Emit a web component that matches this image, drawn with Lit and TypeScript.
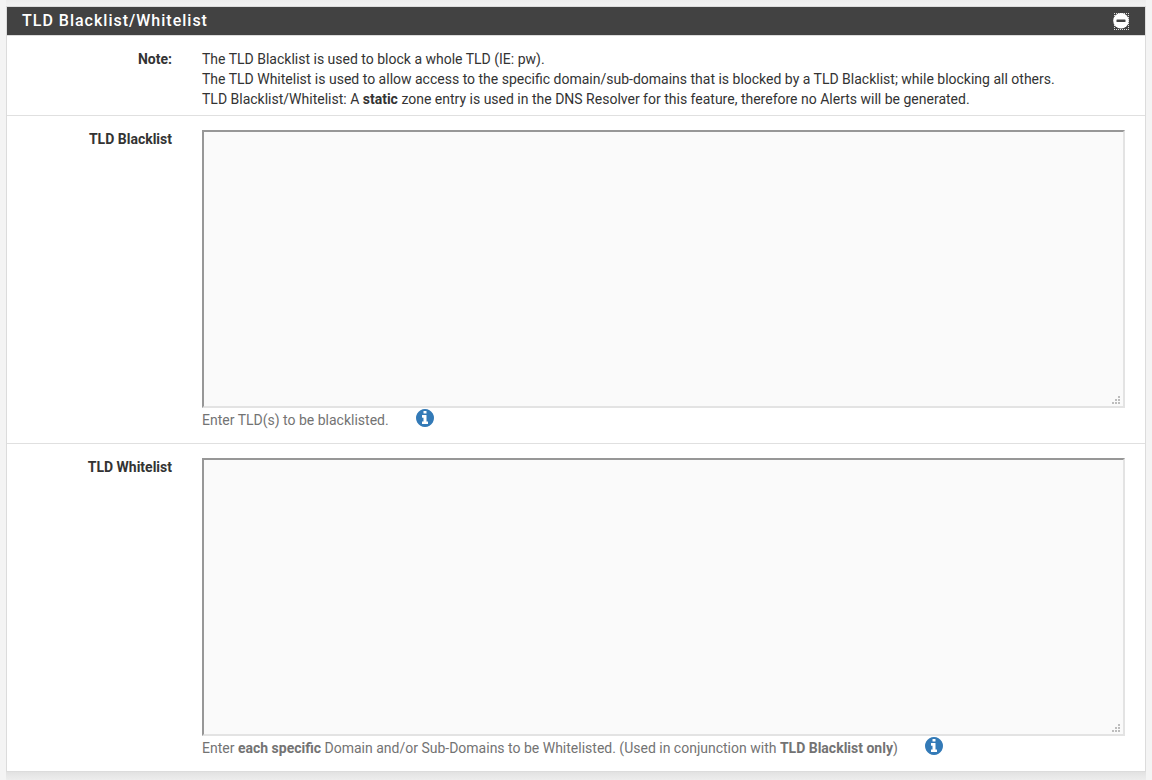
import { LitElement, html, css, svg } from "lit";
import { customElement, property } from "lit/decorators.js";

@customElement("info-icon")
class InfoIcon extends LitElement {
  static styles = css`
    :host { display: block; width: 18px; height: 18px; }
    .glyph { display: block; width: 18px; height: 18px; }
  `;
  render() {
    return html`<svg class="glyph" viewBox="0 0 1536 1536">
      <path fill="#337ab7" d="M1024 1248v-160q0-14-9-23t-23-9h-96V544q0-14-9-23t-23-9H544q-14 0-23 9t-9 23v160q0 14 9 23t23 9h96v320h-96q-14 0-23 9t-9 23v160q0 14 9 23t23 9h448q14 0 23-9t9-23zM896 352V192q0-14-9-23t-23-9H672q-14 0-23 9t-9 23v160q0 14 9 23t23 9h192q14 0 23-9t9-23zM1536 768q0 209-103 385.500T1153.500 1433 768 1536 382.500 1433 103 1153.500 0 768 103 382.500 382.500 103 768 0t385.500 103T1433 382.500 1536 768z"/>
    </svg>`;
  }
}

@customElement("text-box")
class TextBox extends LitElement {
  @property() label = "";
  static styles = css`
    :host { display: block; position: relative; height: 278px; }
    .area {
      display: block; box-sizing: border-box; width: 100%; height: 100%; margin: 0; padding: 6px;
      border: 2px solid; border-color: #979797 #e3e3e3 #e3e3e3 #979797; border-radius: 0;
      background: #fafafa; resize: none; outline: none; font: 14px/20px Roboto, sans-serif; color: #333;
    }
    .grip { position: absolute; right: 5px; bottom: 4px; width: 8px; height: 8px; }
  `;
  render() {
    const dots = [[6, 0], [3, 3], [6, 3], [0, 6], [3, 6], [6, 6]];
    return html`<textarea class="area" aria-label=${this.label}></textarea>
      <svg class="grip" viewBox="0 0 8 8" shape-rendering="crispEdges">
        ${dots.map(([x, y]) => svg`<rect x=${x} y=${y} width="2" height="2" fill="#bdbdbd"/>`)}
      </svg>`;
  }
}

@customElement("app-root")
class AppRoot extends LitElement {
  static styles = css`
    :host {
      display: block; box-sizing: border-box; height: 780px; padding: 0 6px; overflow: hidden;
      background: #f4f4f4; color: #333; font: 14px/20px Roboto, sans-serif;
    }
    .above { height: 6px; background: linear-gradient(#ededed, #f2f2f2); }
    .below { height: 8px; background: linear-gradient(#e2e2e2, #ededed); }
    .panel { box-sizing: border-box; height: 766px; background: #fff; border: 1px solid #dcdcdc; }
    .head {
      display: flex; align-items: flex-start; justify-content: space-between; box-sizing: border-box;
      height: 29px; padding: 0 16px 0 15px; background: #424242; border-bottom: 1px solid #dcdcdc;
    }
    .title { margin: 0; font-size: 16px; line-height: 28px; font-weight: 500; letter-spacing: 1px; color: #fff; }
    .toggle { display: block; width: 16px; height: 17px; margin-top: 6px; }
    .row {
      display: grid; grid-template-columns: 165px 923px; column-gap: 30px; box-sizing: border-box;
      border-bottom: 1px solid #e0e0e0;
    }
    .row:last-child { border-bottom: 0; }
    .note { height: 80px; padding-top: 13px; }
    .field { height: 328px; padding-top: 14px; }
    .label { text-align: right; font-weight: 700; }
    .field .label { padding-top: 0; margin-top: -1px; }
    .help { display: flex; gap: 28px; color: #737373; padding-top: 2px; }
    .help info-icon { margin: -1px 0 0 -1px; }
  `;
  render() {
    return html`<div class="above"></div>
    <section class="panel">
      <header class="head">
        <h2 class="title">TLD Blacklist/Whitelist</h2>
        <svg class="toggle" viewBox="0 0 16 17">
          <path d="M1 .5H16M1 16.500H16M1.500 0V17M15.500 0V17" fill="none" stroke="#e0e0e0" stroke-dasharray="1 1" shape-rendering="crispEdges"/>
          <circle cx="8" cy="7.800" r="7.800" fill="#fff"/>
          <rect x="3.500" y="6.400" width="9" height="2.600" rx="0.600" fill="#424242"/>
        </svg>
      </header>
      <div class="row note">
        <div class="label">Note:</div>
        <div>The TLD Blacklist is used to block a whole TLD (IE: pw).<br>The TLD Whitelist is used to allow access to the specific domain/sub-domains that is blocked by a TLD Blacklist; while blocking all others.<br>TLD Blacklist/Whitelist: A <b>static</b> zone entry is used in the DNS Resolver for this feature, therefore no Alerts will be generated.</div>
      </div>
      <div class="row field">
        <div class="label">TLD Blacklist</div>
        <div>
          <text-box label="TLD Blacklist"></text-box>
          <div class="help"><span>Enter TLD(s) to be blacklisted.</span><info-icon></info-icon></div>
        </div>
      </div>
      <div class="row field">
        <div class="label">TLD Whitelist</div>
        <div>
          <text-box label="TLD Whitelist"></text-box>
          <div class="help"><span>Enter <b>each specific</b> Domain and/or Sub-Domains to be Whitelisted. (Used in conjunction with <b>TLD Blacklist only</b>)</span><info-icon></info-icon></div>
        </div>
      </div>
    </section>
    <div class="below"></div>`;
  }
}
